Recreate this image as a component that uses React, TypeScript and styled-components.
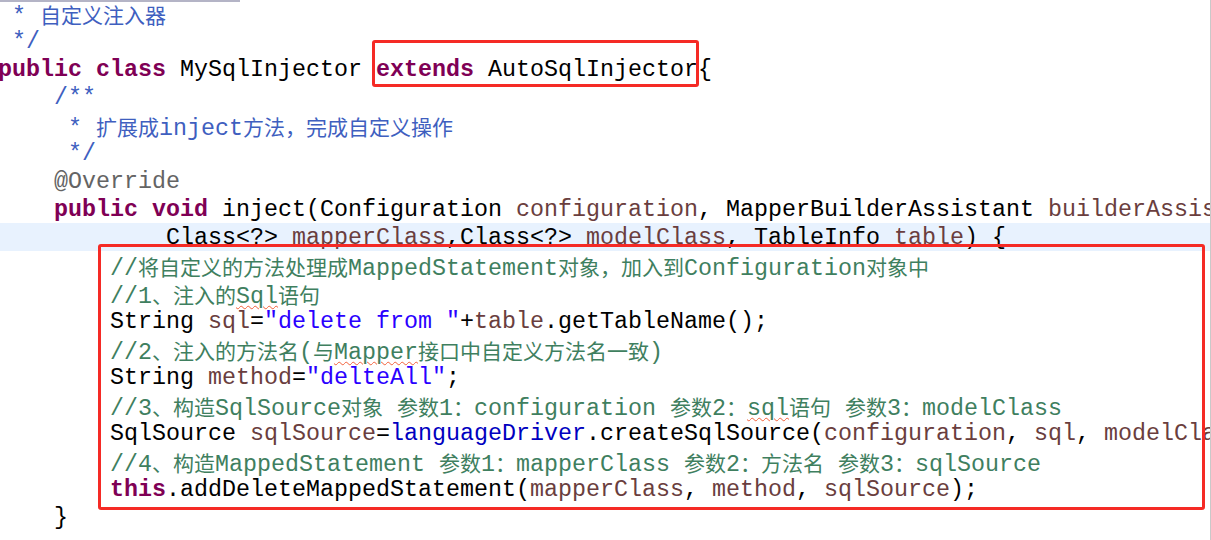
import React from 'react';
import styled, { createGlobalStyle, css } from 'styled-components';

type Kind = 'p' | 'kw' | 'doc' | 'cmt' | 'wavy' | 'str' | 'ann' | 'var' | 'fld';
type Tok = [Kind, string];

const GlobalStyle = createGlobalStyle`
  html, body {
    margin: 0;
    padding: 0;
    background: #ffffff;
  }
`;

const colors: Record<Kind, string> = {
  p: '#000000',
  kw: '#7f0055',
  doc: '#3f5fbf',
  cmt: '#3f7f5f',
  wavy: '#3f7f5f',
  str: '#2a00ff',
  ann: '#646464',
  var: '#6a3e3e',
  fld: '#0000c0',
};

const lines: Tok[][] = [
  [['doc', ' * 自定义注入器']],
  [['doc', ' */']],
  [['kw', 'public'], ['p', ' '], ['kw', 'class'], ['p', ' MySqlInjector '], ['kw', 'extends'], ['p', ' AutoSqlInjector{']],
  [['doc', '    /**']],
  [['doc', '     * 扩展成inject方法，完成自定义操作']],
  [['doc', '     */']],
  [['ann', '    @Override']],
  [
    ['p', '    '], ['kw', 'public'], ['p', ' '], ['kw', 'void'], ['p', ' inject(Configuration '], ['var', 'configuration'],
    ['p', ', MapperBuilderAssistant '], ['var', 'builderAssistant'], ['p', ','],
  ],
  [
    ['p', '            Class<?> '], ['var', 'mapperClass'], ['p', ',Class<?> '], ['var', 'modelClass'],
    ['p', ', TableInfo '], ['var', 'table'], ['p', ') {'],
  ],
  [['cmt', '        //将自定义的方法处理成MappedStatement对象，加入到Configuration对象中']],
  [['cmt', '        //1、注入的'], ['wavy', 'Sql'], ['cmt', '语句']],
  [
    ['p', '        String '], ['var', 'sql'], ['p', '='], ['str', '"delete from "'], ['p', '+'], ['var', 'table'],
    ['p', '.getTableName();'],
  ],
  [['cmt', '        //2、注入的方法名(与'], ['wavy', 'Mapper'], ['cmt', '接口中自定义方法名一致)']],
  [['p', '        String '], ['var', 'method'], ['p', '='], ['str', '"delteAll"'], ['p', ';']],
  [['cmt', '        //3、构造SqlSource对象 参数1：configuration 参数2：'], ['wavy', 'sql'], ['cmt', '语句 参数3：modelClass']],
  [
    ['p', '        SqlSource '], ['var', 'sqlSource'], ['p', '='], ['fld', 'languageDriver'], ['p', '.createSqlSource('],
    ['var', 'configuration'], ['p', ', '], ['var', 'sql'], ['p', ', '], ['var', 'modelClass'], ['p', ');'],
  ],
  [['cmt', '        //4、构造MappedStatement 参数1：mapperClass 参数2：方法名 参数3：sqlSource']],
  [
    ['p', '        '], ['kw', 'this'], ['p', '.addDeleteMappedStatement('], ['var', 'mapperClass'], ['p', ', '],
    ['var', 'method'], ['p', ', '], ['var', 'sqlSource'], ['p', ');'],
  ],
  [['p', '    }']],
];

const CURRENT_LINE = 8;

const Editor = styled.div`
  position: relative;
  box-sizing: border-box;
  width: 1211px;
  height: 540px;
  overflow: hidden;
  background: #ffffff;
  border-right: 1px solid #c9c9c9;
`;

const Code = styled.div`
  margin: -1px 0 0 -2px;
  font-family: "Liberation Mono", "Courier New", monospace;
  font-size: 23.33px;
`;

const Line = styled.div<{ $current?: boolean }>`
  box-sizing: border-box;
  height: 28px;
  padding-top: 2px;
  line-height: 26px;
  white-space: pre;
  background: ${(p) => (p.$current ? '#e8f2fe' : 'transparent')};
`;

const Token = styled.span<{ $kind: Kind }>`
  color: ${(p) => colors[p.$kind]};
  font-weight: ${(p) => (p.$kind === 'kw' ? 700 : 400)};
  ${(p) =>
    p.$kind === 'wavy' &&
    css`
      text-decoration: underline wavy #f2603a;
      text-decoration-thickness: 1px;
      text-underline-offset: 2px;
    `}
`;

const Han = styled.span`
  font-family: "Noto Sans CJK SC", sans-serif;
  font-size: 21px;
  font-weight: 400;
`;

const RedBox = styled.div<{ $x: number; $y: number; $w: number; $h: number }>`
  position: absolute;
  left: ${(p) => p.$x}px;
  top: ${(p) => p.$y}px;
  width: ${(p) => p.$w}px;
  height: ${(p) => p.$h}px;
  box-sizing: border-box;
  border: 3px solid #f52a25;
  border-radius: 3px;
  pointer-events: none;
`;

const TopRule = styled.div`
  position: absolute;
  left: 0;
  top: 0;
  width: 240px;
  height: 2px;
  background: #b4b4c6;
`;

function splitHan(text: string) {
  const parts = text.split(/([\u3000-\u303f\u4e00-\u9fff\uff00-\uffef]+)/);
  return parts.map((part, i) =>
    i % 2 === 1 ? <Han key={i}>{part}</Han> : part
  );
}

export default function App() {
  return (
    <>
      <GlobalStyle />
      <Editor>
        <Code>
          {lines.map((toks, i) => (
            <Line key={i} $current={i === CURRENT_LINE}>
              {toks.map(([kind, text], j) => (
                <Token key={j} $kind={kind}>
                  {splitHan(text)}
                </Token>
              ))}
            </Line>
          ))}
        </Code>
        <TopRule />
        <RedBox $x={372} $y={40} $w={327} $h={47} />
        <RedBox $x={98} $y={244} $w={1107} $h={266} />
      </Editor>
    </>
  );
}
